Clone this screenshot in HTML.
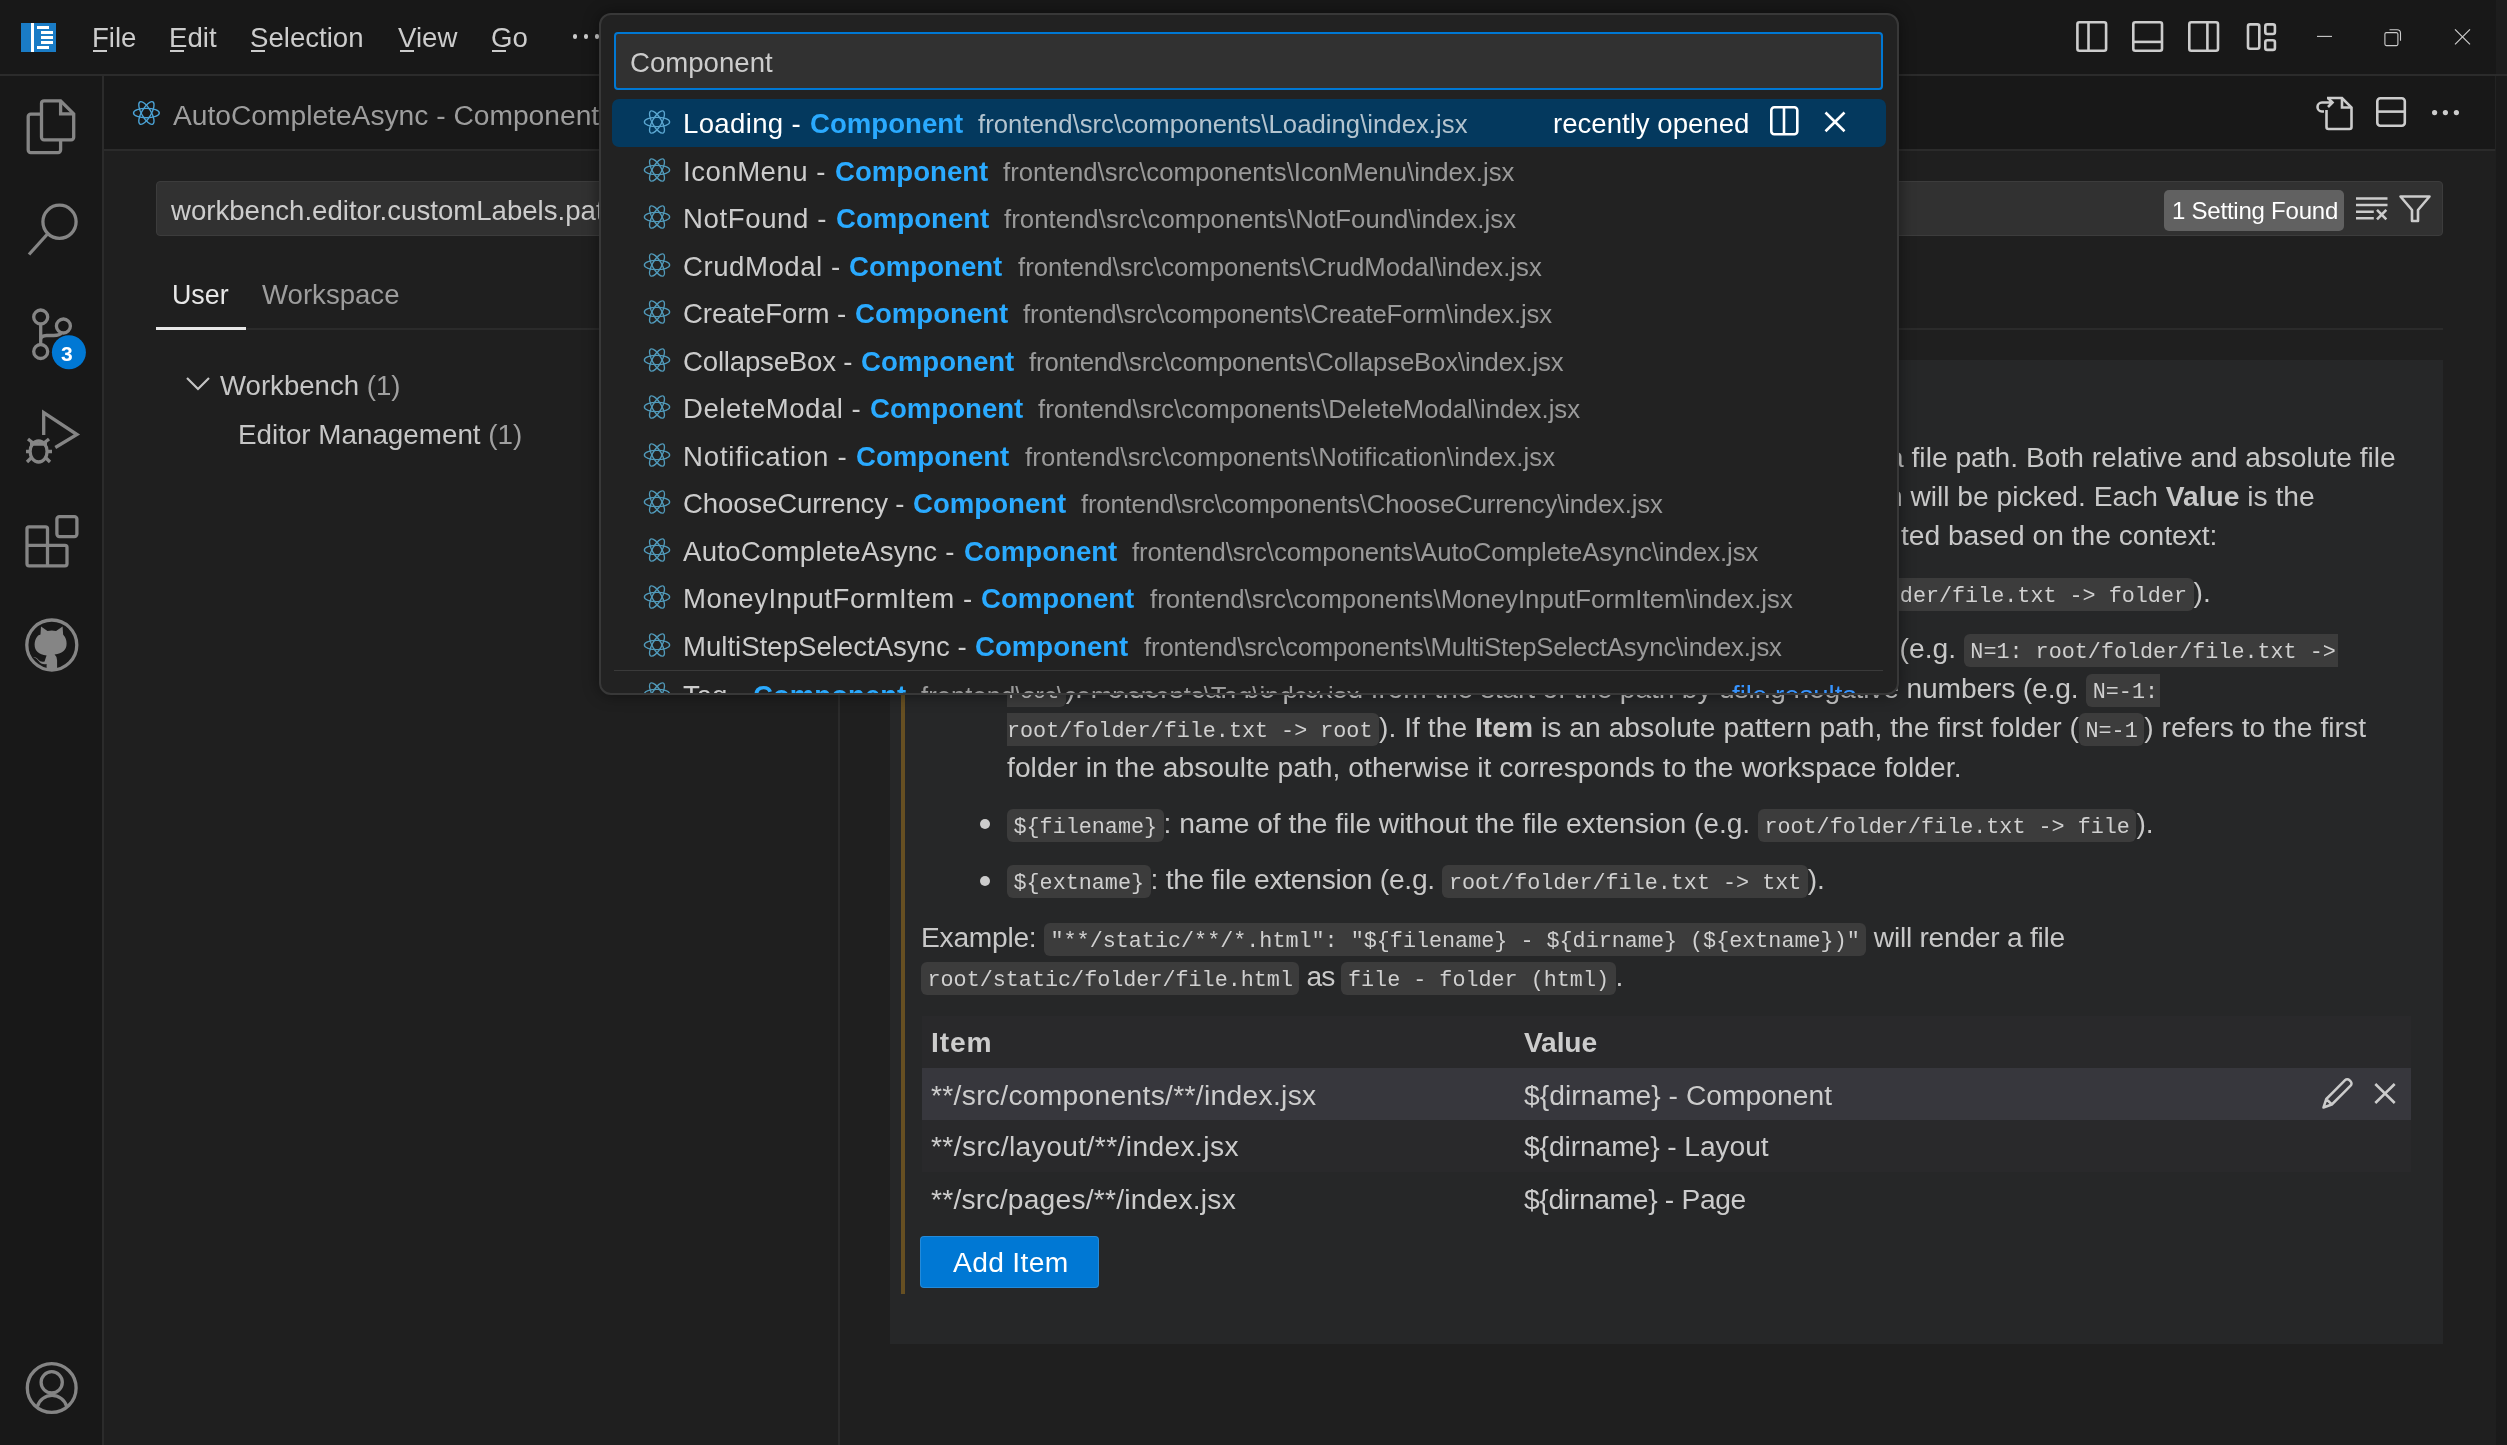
<!DOCTYPE html>
<html><head><meta charset="utf-8">
<style>
html,body{margin:0;padding:0;background:#1f1f1f;}
body{width:2507px;height:1445px;overflow:hidden;position:relative;font-family:"Liberation Sans",sans-serif;color:#cccccc;}
.a{position:absolute;}
.nw{white-space:nowrap;will-change:transform;}
svg{position:absolute;overflow:visible;}
code{letter-spacing:0;font-family:"Liberation Mono",monospace;font-size:21.75px;background:#3c3c3c;color:#d0d0d0;border-radius:6px;padding:6.4px 6.5px 1.9px 6.5px;}
b{font-weight:700;}
</style></head>
<body>

<div class="a" style="left:0px;top:0px;width:2507px;height:74px;background:#181818;"></div>
<div class="a" style="left:0px;top:74px;width:2507px;height:2px;background:#2b2b2b;"></div>
<div class="a" style="left:21px;top:23px;width:35px;height:29px;background:#1a7cc6;"></div>
<div class="a" style="left:31px;top:23px;width:3px;height:29px;background:#ffffff;"></div>
<div class="a" style="left:37px;top:26px;width:12px;height:2.6px;background:#ffffff;"></div>
<div class="a" style="left:41px;top:31px;width:12px;height:2.6px;background:#ffffff;"></div>
<div class="a" style="left:41px;top:36.3px;width:12px;height:2.6px;background:#ffffff;"></div>
<div class="a" style="left:41px;top:41.2px;width:12px;height:2.6px;background:#ffffff;"></div>
<div class="a" style="left:37px;top:46.2px;width:12px;height:2.6px;background:#ffffff;"></div>
<div class="a nw" style="left:91.5px;top:23.01px;font-size:27.6px;line-height:30.83px;color:#cccccc;font-weight:400;font-family:'Liberation Sans',sans-serif;">File</div>
<div class="a" style="left:93px;top:50px;width:14px;height:2px;background:#cccccc;"></div>
<div class="a nw" style="left:168.5px;top:23.01px;font-size:27.6px;line-height:30.83px;color:#cccccc;font-weight:400;font-family:'Liberation Sans',sans-serif;">Edit</div>
<div class="a" style="left:170px;top:50px;width:14px;height:2px;background:#cccccc;"></div>
<div class="a nw" style="left:249.5px;top:23.01px;font-size:27.6px;line-height:30.83px;color:#cccccc;font-weight:400;font-family:'Liberation Sans',sans-serif;">Selection</div>
<div class="a" style="left:251px;top:50px;width:14px;height:2px;background:#cccccc;"></div>
<div class="a nw" style="left:398.0px;top:23.01px;font-size:27.6px;line-height:30.83px;color:#cccccc;font-weight:400;font-family:'Liberation Sans',sans-serif;">View</div>
<div class="a" style="left:399.5px;top:50px;width:14px;height:2px;background:#cccccc;"></div>
<div class="a nw" style="left:490.5px;top:23.01px;font-size:27.6px;line-height:30.83px;color:#cccccc;font-weight:400;font-family:'Liberation Sans',sans-serif;">Go</div>
<div class="a" style="left:492px;top:50px;width:14px;height:2px;background:#cccccc;"></div>
<div class="a" style="left:573.0999999999999px;top:34.3px;width:4.4px;height:4.4px;border-radius:50%;background:#cccccc;"></div>
<div class="a" style="left:584.0px;top:34.3px;width:4.4px;height:4.4px;border-radius:50%;background:#cccccc;"></div>
<div class="a" style="left:594.8px;top:34.3px;width:4.4px;height:4.4px;border-radius:50%;background:#cccccc;"></div>
<svg style="left:2060px;top:10px;" width="240" height="60" viewBox="0 0 240 60"><rect x="17.4" y="12.3" width="28.7" height="28.4" rx="2" fill="none" stroke="#cccccc" stroke-width="2.6"/><line x1="28.5" y1="12" x2="28.5" y2="41" stroke="#cccccc" stroke-width="2.6"/><rect x="73.3" y="12.3" width="28.7" height="28.4" rx="2" fill="none" stroke="#cccccc" stroke-width="2.6"/><line x1="73" y1="31.9" x2="102" y2="31.9" stroke="#cccccc" stroke-width="2.6"/><rect x="129.3" y="12.3" width="28.7" height="28.4" rx="2" fill="none" stroke="#cccccc" stroke-width="2.6"/><line x1="147.4" y1="12" x2="147.4" y2="41" stroke="#cccccc" stroke-width="2.6"/><rect x="188" y="14.4" width="11.3" height="24.3" rx="2" fill="none" stroke="#cccccc" stroke-width="2.6"/><rect x="205.3" y="14.4" width="9.6" height="9.6" rx="2" fill="none" stroke="#cccccc" stroke-width="2.6"/><rect x="205.3" y="30.3" width="9.6" height="9.6" rx="2" fill="none" stroke="#cccccc" stroke-width="2.6"/></svg>
<svg style="left:2300px;top:10px;" width="207" height="60" viewBox="0 0 207 60"><line x1="17" y1="26.4" x2="32" y2="26.4" stroke="#cccccc" stroke-width="1.1"/><path d="M86.4 22.6 h10 a1.5 1.5 0 0 1 1.5 1.5 v10 a1.5 1.5 0 0 1 -1.5 1.5 h-10 a1.5 1.5 0 0 1 -1.5 -1.5 v-10 a1.5 1.5 0 0 1 1.5 -1.5z" fill="none" stroke="#cccccc" stroke-width="1.1"/><path d="M89.5 19.7 h7.5 a3.5 3.5 0 0 1 3.5 3.5 v7.5" fill="none" stroke="#cccccc" stroke-width="1.1"/><path d="M155 19.3 L170 34.4 M170 19.3 L155 34.4" stroke="#cccccc" stroke-width="1.2"/></svg>
<div class="a" style="left:2496px;top:0px;width:11px;height:74px;background:#1d1d1d;"></div>
<div class="a" style="left:0px;top:76px;width:102px;height:1369px;background:#181818;"></div>
<div class="a" style="left:102px;top:76px;width:2px;height:1369px;background:#2b2b2b;"></div>
<svg style="left:0px;top:80px;" width="102" height="100" viewBox="0 0 102 100"><path d="M41.5 34.2 H30.7 a2.5 2.5 0 0 0 -2.5 2.5 v33.4 a2.5 2.5 0 0 0 2.5 2.5 h27.4 a2.5 2.5 0 0 0 2.5 -2.5 v-10.3" fill="none" stroke="#858585" stroke-width="3.3"/><path d="M44 20.8 h16.6 l13.1 13.1 v23.4 a2.5 2.5 0 0 1 -2.5 2.5 h-27.2 a2.5 2.5 0 0 1 -2.5 -2.5 v-34 a2.5 2.5 0 0 1 2.5 -2.5z" fill="none" stroke="#858585" stroke-width="3.3"/><path d="M60.6 20.8 v13.1 h13.1" fill="none" stroke="#858585" stroke-width="3.3"/></svg>
<svg style="left:0px;top:190px;" width="102" height="80" viewBox="0 0 102 80"><circle cx="59.5" cy="31.8" r="16.6" fill="none" stroke="#858585" stroke-width="3.3"/><line x1="47.5" y1="44" x2="29" y2="64.5" stroke="#858585" stroke-width="3.3"/></svg>
<svg style="left:0px;top:300px;" width="102" height="80" viewBox="0 0 102 80"><circle cx="40.7" cy="17" r="7" fill="none" stroke="#858585" stroke-width="3.3"/><circle cx="63.4" cy="26" r="7" fill="none" stroke="#858585" stroke-width="3.3"/><circle cx="40.7" cy="51.5" r="7" fill="none" stroke="#858585" stroke-width="3.3"/><path d="M40.7 24 V44.5 M40.7 40 q0 -4.5 6 -4.5 h7 q6 0 8 -3" fill="none" stroke="#858585" stroke-width="3.3"/><circle cx="68.9" cy="52.3" r="17" fill="#0078d4"/></svg>
<div class="a nw" style="left:60.5px;top:342.49px;font-size:21px;line-height:23.46px;color:#ffffff;font-weight:700;font-family:'Liberation Sans',sans-serif;">3</div>
<svg style="left:0px;top:400px;" width="102" height="80" viewBox="0 0 102 80"><path d="M43.7 35 V12.6 L77 34.5 L55.3 47.5" fill="none" stroke="#858585" stroke-width="3.3"/><ellipse cx="38.6" cy="51.5" rx="8.5" ry="10.5" fill="none" stroke="#858585" stroke-width="3.3"/><path d="M30 44 h17 M26 51.5 h5 M46 51.5 h6 M27 62 l5 -5 M50 62 l-5 -5 M28 39 l5 4 M49 39 l-5 4" fill="none" stroke="#858585" stroke-width="3.3"/></svg>
<svg style="left:0px;top:500px;" width="102" height="80" viewBox="0 0 102 80"><rect x="56.9" y="16.6" width="20" height="20" rx="2.5" fill="none" stroke="#858585" stroke-width="3.3"/><path d="M29 26.8 h16.5 a2 2 0 0 1 2 2 v16.5 h17.5 a2 2 0 0 1 2 2 v16.5 a2 2 0 0 1 -2 2 h-36 a2 2 0 0 1 -2 -2 v-35 a2 2 0 0 1 2 -2z M27.5 45.3 h20 M47.5 45.3 v20" fill="none" stroke="#858585" stroke-width="3.3"/></svg>
<svg style="left:0px;top:600px;" width="102" height="90" viewBox="0 0 102 90"><circle cx="51.8" cy="45" r="25" fill="none" stroke="#858585" stroke-width="3.3"/><path d="M40.5 34.5 l0.5 -8 l6.5 4.5 q4.3 -1.2 8.6 0 l6.5 -4.5 l0.5 8 q3.5 4 3.5 9 q0 9.5 -12 11 q2.5 2 2.5 6 v9.5 h-10.5 v-6 q-5 1 -8 -3 q-2 -3 -5.5 -4 q3.5 0 5.5 3 q2 2.5 6 1.5 q1.5 -5 2 -6 q-12 -1.5 -12 -11 q0 -5 3.5 -9z" fill="#858585"/></svg>
<svg style="left:0px;top:1340px;" width="102" height="100" viewBox="0 0 102 100"><circle cx="51.7" cy="48" r="24.4" fill="none" stroke="#858585" stroke-width="3.3"/><circle cx="51.7" cy="42.3" r="10.6" fill="none" stroke="#858585" stroke-width="3.3"/><path d="M37.4 66.5 A15.2 15.2 0 0 1 66.7 66.5" fill="none" stroke="#858585" stroke-width="3.3"/></svg>
<div class="a" style="left:104px;top:76px;width:2392px;height:73px;background:#181818;"></div>
<div class="a" style="left:104px;top:149px;width:2392px;height:2px;background:#2b2b2b;"></div>
<svg style="left:103px;top:75px;" width="80" height="74" viewBox="0 0 80 74"><g transform="translate(43.4,38) scale(1.0)" fill="none" stroke="#4ba3d6" stroke-width="1.35"><ellipse rx="12.9" ry="4.7"/><ellipse rx="12.9" ry="4.7" transform="rotate(60)"/><ellipse rx="12.9" ry="4.7" transform="rotate(120)"/></g></svg>
<div class="a nw" style="left:173px;top:99.67px;font-size:28.2px;line-height:31.51px;color:#9d9d9d;font-weight:400;font-family:'Liberation Sans',sans-serif;">AutoCompleteAsync - Component</div>
<svg style="left:2300px;top:85px;" width="180" height="60" viewBox="0 0 180 60"><path d="M27 13 h15 l9.5 9.5 v19.5 a2 2 0 0 1 -2 2 h-21 a2 2 0 0 1 -2 -2 v-17" fill="none" stroke="#cccccc" stroke-width="2.6"/><path d="M42 13 v9.5 h9.5" fill="none" stroke="#cccccc" stroke-width="2.6"/><path d="M24 26.5 h-2 a4.5 4.5 0 0 1 0 -9 h10 M28 13 l4.5 4.5 l-4.5 4.5" fill="none" stroke="#cccccc" stroke-width="2.6"/><rect x="77.3" y="13.3" width="27.5" height="27.5" rx="3" fill="none" stroke="#cccccc" stroke-width="2.6"/><line x1="77" y1="26.6" x2="105" y2="26.6" stroke="#cccccc" stroke-width="2.6"/><circle cx="134.6" cy="27.6" r="2.6" fill="#cccccc"/><circle cx="145.4" cy="27.6" r="2.6" fill="#cccccc"/><circle cx="156.4" cy="27.6" r="2.6" fill="#cccccc"/></svg>
<div class="a" style="left:104px;top:151px;width:2392px;height:1294px;background:#1f1f1f;"></div>
<div class="a" style="left:2496px;top:76px;width:11px;height:1369px;background:#1a1a1a;"></div>
<div class="a" style="left:2495px;top:76px;width:1px;height:75px;background:#232323;"></div>
<div class="a" style="left:156px;top:181px;width:2287px;height:55px;background:#313131;border:1px solid #3c3c3c;box-sizing:border-box;border-radius:4px;"></div>
<div class="a nw" style="left:170.5px;top:196.31px;font-size:27.6px;line-height:30.83px;color:#cccccc;font-weight:400;font-family:'Liberation Sans',sans-serif;">workbench.editor.customLabels.patterns</div>
<div class="a" style="left:2164px;top:190px;width:180px;height:41px;background:#616161;border-radius:5px;"></div>
<div class="a nw" style="left:2171.5px;top:198.37px;font-size:24px;line-height:26.81px;color:#ffffff;font-weight:400;font-family:'Liberation Sans',sans-serif;letter-spacing:-0.230px;">1 Setting Found</div>
<svg style="left:2350px;top:190px;" width="90" height="40" viewBox="0 0 90 40"><path d="M6 8.5 h31.5 M6 15 h31.5 M6 21.7 h17.8 M6 28.3 h17.8" stroke="#cccccc" stroke-width="2.6"/><path d="M27 19.8 l9.3 9.5 M36.3 19.8 l-9.3 9.5" stroke="#cccccc" stroke-width="2.6"/><path d="M50.5 6.5 h29 l-11.5 13.5 v11 h-6 v-11z" fill="none" stroke="#cccccc" stroke-width="2.6" stroke-linejoin="round"/></svg>
<div class="a nw" style="left:172px;top:280.74px;font-size:26.8px;line-height:29.94px;color:#e7e7e7;font-weight:400;font-family:'Liberation Sans',sans-serif;">User</div>
<div class="a nw" style="left:262px;top:280.01px;font-size:27.6px;line-height:30.83px;color:#9d9d9d;font-weight:400;font-family:'Liberation Sans',sans-serif;">Workspace</div>
<div class="a" style="left:156px;top:328px;width:2287px;height:1.5px;background:#2b2b2b;"></div>
<div class="a" style="left:156px;top:327px;width:90px;height:3px;background:#e7e7e7;"></div>
<svg style="left:170px;top:360px;" width="60" height="40" viewBox="0 0 60 40"><path d="M17 18 l11 11 l11 -11" fill="none" stroke="#c5c5c5" stroke-width="2.2"/></svg>
<div class="a nw" style="left:220px;top:371.01px;font-size:27.6px;line-height:30.83px;color:#c6c6c6;font-weight:400;font-family:'Liberation Sans',sans-serif;">Workbench <span style="color:#a0a0a0">(1)</span></div>
<div class="a nw" style="left:237.5px;top:419.13px;font-size:27.8px;line-height:31.06px;color:#c6c6c6;font-weight:400;font-family:'Liberation Sans',sans-serif;">Editor Management <span style="color:#a0a0a0">(1)</span></div>
<div class="a" style="left:838px;top:330px;width:1.6px;height:1115px;background:#2b2b2b;"></div>
<div class="a" style="left:890px;top:360px;width:1553px;height:984px;background:#262728;"></div>
<div class="a" style="left:901px;top:375px;width:4px;height:919px;background:#664f22;"></div>
<div class="a nw" style="right:111.50px;top:441.77px;font-size:28.2px;line-height:31.51px;color:#c8c8c8;font-weight:400;font-family:'Liberation Sans',sans-serif;">Controls the rendering of the editor label. Each <b>Item</b> is a pattern that matches a file path. Both relative and absolute file</div>
<div class="a nw" style="right:192.50px;top:481.17px;font-size:28.2px;line-height:31.51px;color:#c8c8c8;font-weight:400;font-family:'Liberation Sans',sans-serif;">Absolute patterns must start with a <code>/</code>. In case multiple patterns match, the longest matching path will be picked. Each <b>Value</b> is the</div>
<div class="a nw" style="right:290.00px;top:520.27px;font-size:28.2px;line-height:31.51px;color:#c8c8c8;font-weight:400;font-family:'Liberation Sans',sans-serif;">template for the rendered editor when the <b>Item</b> matches. Variables are substituted based on the context:</div>
<div class="a nw" style="right:296.50px;top:577.47px;font-size:28.2px;line-height:31.51px;color:#c8c8c8;font-weight:400;font-family:'Liberation Sans',sans-serif;"><code style="border-radius:6px 6px 6px 6px;padding-left:6.5px;padding-right:6.5px;">${dirname}</code>: name of the folder in which the file is located (e.g. <code style="border-radius:6px 6px 6px 6px;padding-left:6.5px;padding-right:6.5px;">root/folder/file.txt -&gt; folder</code>).</div>
<div class="a nw" style="right:169.00px;top:633.47px;font-size:28.2px;line-height:31.51px;color:#c8c8c8;font-weight:400;font-family:'Liberation Sans',sans-serif;"><code style="border-radius:6px 6px 6px 6px;padding-left:6.5px;padding-right:6.5px;">${dirname(N)}</code>: name of the nth parent folder in which the file is located (e.g. <code style="border-radius:6px 0 0 6px;padding-left:6.5px;padding-right:2px;">N=1: root/folder/file.txt -&gt;</code></div>
<div class="a nw" style="left:1007px;top:672.97px;font-size:28.2px;line-height:31.51px;color:#c8c8c8;font-weight:400;font-family:'Liberation Sans',sans-serif;letter-spacing:-0.143px;"><code style="border-radius:0 6px 6px 0;padding-left:0;padding-right:6.5px;">root</code>). Folders can be picked from the start of the path by using negative numbers (e.g. <code style="border-radius:6px 0 0 6px;padding-left:6.5px;padding-right:2px;">N=-1:</code></div>
<div class="a nw" style="left:1007px;top:712.47px;font-size:28.2px;line-height:31.51px;color:#c8c8c8;font-weight:400;font-family:'Liberation Sans',sans-serif;letter-spacing:0.045px;"><code style="border-radius:0 6px 6px 0;padding-left:0;padding-right:6.5px;">root/folder/file.txt -&gt; root</code>). If the <b>Item</b> is an absolute pattern path, the first folder (<code style="border-radius:6px 6px 6px 6px;padding-left:6.5px;padding-right:6.5px;">N=-1</code>) refers to the first</div>
<div class="a nw" style="left:1007px;top:751.97px;font-size:28.2px;line-height:31.51px;color:#c8c8c8;font-weight:400;font-family:'Liberation Sans',sans-serif;letter-spacing:0.044px;">folder in the absoulte path, otherwise it corresponds to the workspace folder.</div>
<div class="a" style="left:979.8px;top:819.0px;width:10.4px;height:10.4px;border-radius:50%;background:#cccccc;"></div>
<div class="a" style="left:979.8px;top:875.5px;width:10.4px;height:10.4px;border-radius:50%;background:#cccccc;"></div>
<div class="a nw" style="left:1007px;top:807.97px;font-size:28.2px;line-height:31.51px;color:#c8c8c8;font-weight:400;font-family:'Liberation Sans',sans-serif;letter-spacing:-0.051px;"><code style="border-radius:6px 6px 6px 6px;padding-left:6.5px;padding-right:6.5px;">${filename}</code>: name of the file without the file extension (e.g. <code style="border-radius:6px 6px 6px 6px;padding-left:6.5px;padding-right:6.5px;">root/folder/file.txt -&gt; file</code>).</div>
<div class="a nw" style="left:1007px;top:864.47px;font-size:28.2px;line-height:31.51px;color:#c8c8c8;font-weight:400;font-family:'Liberation Sans',sans-serif;letter-spacing:-0.274px;"><code style="border-radius:6px 6px 6px 6px;padding-left:6.5px;padding-right:6.5px;">${extname}</code>: the file extension (e.g. <code style="border-radius:6px 6px 6px 6px;padding-left:6.5px;padding-right:6.5px;">root/folder/file.txt -&gt; txt</code>).</div>
<div class="a nw" style="left:921px;top:921.97px;font-size:28.2px;line-height:31.51px;color:#c8c8c8;font-weight:400;font-family:'Liberation Sans',sans-serif;letter-spacing:-0.259px;">Example: <code style="border-radius:6px 6px 6px 6px;padding-left:6.5px;padding-right:6.5px;">&quot;**/static/**/*.html&quot;: &quot;${filename} - ${dirname} (${extname})&quot;</code> will render a file</div>
<div class="a nw" style="left:920.5px;top:961.47px;font-size:28.2px;line-height:31.51px;color:#c8c8c8;font-weight:400;font-family:'Liberation Sans',sans-serif;letter-spacing:-0.859px;"><code style="border-radius:6px 6px 6px 6px;padding-left:6.5px;padding-right:6.5px;">root/static/folder/file.html</code> as <code style="border-radius:6px 6px 6px 6px;padding-left:6.5px;padding-right:6.5px;">file - folder (html)</code>.</div>
<div class="a" style="left:922px;top:1016px;width:1489px;height:52px;background:#29292b;"></div>
<div class="a" style="left:922px;top:1068px;width:1489px;height:52px;background:#37373d;"></div>
<div class="a" style="left:922px;top:1120px;width:1489px;height:52px;background:#29292b;"></div>
<div class="a nw" style="left:931px;top:1027.47px;font-size:28.2px;line-height:31.51px;color:#cccccc;font-weight:700;font-family:'Liberation Sans',sans-serif;letter-spacing:0.883px;">Item</div>
<div class="a nw" style="left:1523.5px;top:1027.47px;font-size:28.2px;line-height:31.51px;color:#cccccc;font-weight:700;font-family:'Liberation Sans',sans-serif;letter-spacing:-0.131px;">Value</div>
<div class="a nw" style="left:931px;top:1079.77px;font-size:28.2px;line-height:31.51px;color:#cccccc;font-weight:400;font-family:'Liberation Sans',sans-serif;letter-spacing:0.316px;">**/src/components/**/index.jsx</div>
<div class="a nw" style="left:1523.5px;top:1079.77px;font-size:28.2px;line-height:31.51px;color:#cccccc;font-weight:400;font-family:'Liberation Sans',sans-serif;letter-spacing:0.040px;">${dirname} - Component</div>
<div class="a nw" style="left:931px;top:1131.47px;font-size:28.2px;line-height:31.51px;color:#cccccc;font-weight:400;font-family:'Liberation Sans',sans-serif;letter-spacing:0.397px;">**/src/layout/**/index.jsx</div>
<div class="a nw" style="left:1523.5px;top:1131.47px;font-size:28.2px;line-height:31.51px;color:#cccccc;font-weight:400;font-family:'Liberation Sans',sans-serif;letter-spacing:-0.081px;">${dirname} - Layout</div>
<div class="a nw" style="left:931px;top:1183.87px;font-size:28.2px;line-height:31.51px;color:#cccccc;font-weight:400;font-family:'Liberation Sans',sans-serif;letter-spacing:0.230px;">**/src/pages/**/index.jsx</div>
<div class="a nw" style="left:1523.5px;top:1183.87px;font-size:28.2px;line-height:31.51px;color:#cccccc;font-weight:400;font-family:'Liberation Sans',sans-serif;letter-spacing:-0.308px;">${dirname} - Page</div>
<svg style="left:2310px;top:1070px;" width="100" height="50" viewBox="0 0 100 50"><path d="M13.5 37.5 l2.8 -8.5 l18.8 -18.8 a3 3 0 0 1 4.3 0 l1.2 1.2 a3 3 0 0 1 0 4.3 l-18.8 18.8z M16.3 29 l5.6 5.6" fill="none" stroke="#cccccc" stroke-width="2.5" stroke-linejoin="round"/><path d="M65.3 14 l19.4 19 M84.7 14 l-19.4 19" stroke="#cccccc" stroke-width="2.6"/></svg>
<div class="a" style="left:920px;top:1236px;width:179px;height:52px;background:#0078d4;border-radius:4px;border:1px solid rgba(255,255,255,0.14);box-sizing:border-box;"></div>
<div class="a nw" style="left:952.5px;top:1247.47px;font-size:28.2px;line-height:31.51px;color:#ffffff;font-weight:400;font-family:'Liberation Sans',sans-serif;letter-spacing:0.336px;">Add Item</div>
<div class="a" style="left:599px;top:13px;width:1300px;height:682px;background:#222222;border:2px solid #383838;box-sizing:border-box;border-radius:12px;box-shadow:0 0 16px rgba(0,0,0,0.45);overflow:hidden;">
<div class="a" style="left:13px;top:17px;width:1269px;height:58px;background:#313131;border:2px solid #0078d4;box-sizing:border-box;border-radius:4px;"></div>
<div class="a nw" style="left:28.5px;top:33.21px;font-size:27.6px;line-height:30.83px;color:#cccccc;font-weight:400;font-family:'Liberation Sans',sans-serif;">Component</div>
<div class="a" style="left:11px;top:84.1px;width:1274px;height:47.6px;background:#04395e;border-radius:7px;"></div>
<svg style="left:29px;top:87.1px;" width="60" height="40" viewBox="0 0 60 40"><g transform="translate(27,20) scale(0.98)" fill="none" stroke="#5aa6d0" stroke-width="1.35"><ellipse rx="12.9" ry="4.7"/><ellipse rx="12.9" ry="4.7" transform="rotate(60)"/><ellipse rx="12.9" ry="4.7" transform="rotate(120)"/></g></svg>
<div class="a nw" style="left:82.20000000000005px;top:94.11px;font-size:27.6px;line-height:30.83px;color:#ffffff;font-weight:400;font-family:'Liberation Sans',sans-serif;letter-spacing:0.325px;">Loading -</div>
<div class="a nw" style="left:208.70000000000005px;top:94.11px;font-size:27.6px;line-height:30.83px;color:#2aaaff;font-weight:700;font-family:'Liberation Sans',sans-serif;">Component</div>
<div class="a nw" style="left:377.0px;top:95.13px;font-size:25.7px;line-height:28.71px;color:#b4c4cf;font-weight:400;font-family:'Liberation Sans',sans-serif;letter-spacing:0.028px;">frontend\src\components\Loading\index.jsx</div>
<div class="a nw" style="left:951.5px;top:94.11px;font-size:27.6px;line-height:30.83px;color:#ffffff;font-weight:400;font-family:'Liberation Sans',sans-serif;">recently opened</div>
<svg style="left:1159px;top:84.1px;" width="100" height="48" viewBox="0 0 100 48"><rect x="11.3" y="8.3" width="26" height="27" rx="3" fill="none" stroke="#ffffff" stroke-width="2.6"/><line x1="24" y1="8" x2="24" y2="36" stroke="#ffffff" stroke-width="2.6"/><path d="M65.5 13.5 l19 18.7 M84.5 13.5 l-19 18.7" stroke="#ffffff" stroke-width="2.6"/></svg>
<svg style="left:29px;top:134.62px;" width="60" height="40" viewBox="0 0 60 40"><g transform="translate(27,20) scale(0.98)" fill="none" stroke="#519aba" stroke-width="1.35"><ellipse rx="12.9" ry="4.7"/><ellipse rx="12.9" ry="4.7" transform="rotate(60)"/><ellipse rx="12.9" ry="4.7" transform="rotate(120)"/></g></svg>
<div class="a nw" style="left:82.20000000000005px;top:141.63px;font-size:27.6px;line-height:30.83px;color:#cccccc;font-weight:400;font-family:'Liberation Sans',sans-serif;letter-spacing:0.495px;">IconMenu -</div>
<div class="a nw" style="left:233.70000000000005px;top:141.63px;font-size:27.6px;line-height:30.83px;color:#2aaaff;font-weight:700;font-family:'Liberation Sans',sans-serif;">Component</div>
<div class="a nw" style="left:402.0px;top:142.65px;font-size:25.7px;line-height:28.71px;color:#9a9a9a;font-weight:400;font-family:'Liberation Sans',sans-serif;letter-spacing:0.042px;">frontend\src\components\IconMenu\index.jsx</div>
<svg style="left:29px;top:182.14px;" width="60" height="40" viewBox="0 0 60 40"><g transform="translate(27,20) scale(0.98)" fill="none" stroke="#519aba" stroke-width="1.35"><ellipse rx="12.9" ry="4.7"/><ellipse rx="12.9" ry="4.7" transform="rotate(60)"/><ellipse rx="12.9" ry="4.7" transform="rotate(120)"/></g></svg>
<div class="a nw" style="left:82.20000000000005px;top:189.15px;font-size:27.6px;line-height:30.83px;color:#cccccc;font-weight:400;font-family:'Liberation Sans',sans-serif;letter-spacing:0.605px;">NotFound -</div>
<div class="a nw" style="left:234.79999999999995px;top:189.15px;font-size:27.6px;line-height:30.83px;color:#2aaaff;font-weight:700;font-family:'Liberation Sans',sans-serif;">Component</div>
<div class="a nw" style="left:403.0999999999999px;top:190.17px;font-size:25.7px;line-height:28.71px;color:#9a9a9a;font-weight:400;font-family:'Liberation Sans',sans-serif;letter-spacing:0.056px;">frontend\src\components\NotFound\index.jsx</div>
<svg style="left:29px;top:229.66px;" width="60" height="40" viewBox="0 0 60 40"><g transform="translate(27,20) scale(0.98)" fill="none" stroke="#519aba" stroke-width="1.35"><ellipse rx="12.9" ry="4.7"/><ellipse rx="12.9" ry="4.7" transform="rotate(60)"/><ellipse rx="12.9" ry="4.7" transform="rotate(120)"/></g></svg>
<div class="a nw" style="left:82.20000000000005px;top:236.67px;font-size:27.6px;line-height:30.83px;color:#cccccc;font-weight:400;font-family:'Liberation Sans',sans-serif;letter-spacing:0.534px;">CrudModal -</div>
<div class="a nw" style="left:248.39999999999998px;top:236.67px;font-size:27.6px;line-height:30.83px;color:#2aaaff;font-weight:700;font-family:'Liberation Sans',sans-serif;">Component</div>
<div class="a nw" style="left:416.70000000000005px;top:237.69px;font-size:25.7px;line-height:28.71px;color:#9a9a9a;font-weight:400;font-family:'Liberation Sans',sans-serif;letter-spacing:0.028px;">frontend\src\components\CrudModal\index.jsx</div>
<svg style="left:29px;top:277.18px;" width="60" height="40" viewBox="0 0 60 40"><g transform="translate(27,20) scale(0.98)" fill="none" stroke="#519aba" stroke-width="1.35"><ellipse rx="12.9" ry="4.7"/><ellipse rx="12.9" ry="4.7" transform="rotate(60)"/><ellipse rx="12.9" ry="4.7" transform="rotate(120)"/></g></svg>
<div class="a nw" style="left:82.20000000000005px;top:284.19px;font-size:27.6px;line-height:30.83px;color:#cccccc;font-weight:400;font-family:'Liberation Sans',sans-serif;letter-spacing:-0.080px;">CreateForm -</div>
<div class="a nw" style="left:253.79999999999995px;top:284.19px;font-size:27.6px;line-height:30.83px;color:#2aaaff;font-weight:700;font-family:'Liberation Sans',sans-serif;">Component</div>
<div class="a nw" style="left:422.0999999999999px;top:285.21px;font-size:25.7px;line-height:28.71px;color:#9a9a9a;font-weight:400;font-family:'Liberation Sans',sans-serif;letter-spacing:-0.111px;">frontend\src\components\CreateForm\index.jsx</div>
<svg style="left:29px;top:324.70000000000005px;" width="60" height="40" viewBox="0 0 60 40"><g transform="translate(27,20) scale(0.98)" fill="none" stroke="#519aba" stroke-width="1.35"><ellipse rx="12.9" ry="4.7"/><ellipse rx="12.9" ry="4.7" transform="rotate(60)"/><ellipse rx="12.9" ry="4.7" transform="rotate(120)"/></g></svg>
<div class="a nw" style="left:82.20000000000005px;top:331.71px;font-size:27.6px;line-height:30.83px;color:#cccccc;font-weight:400;font-family:'Liberation Sans',sans-serif;letter-spacing:-0.199px;">CollapseBox -</div>
<div class="a nw" style="left:259.9px;top:331.71px;font-size:27.6px;line-height:30.83px;color:#2aaaff;font-weight:700;font-family:'Liberation Sans',sans-serif;">Component</div>
<div class="a nw" style="left:428.20000000000005px;top:332.73px;font-size:25.7px;line-height:28.71px;color:#9a9a9a;font-weight:400;font-family:'Liberation Sans',sans-serif;letter-spacing:-0.148px;">frontend\src\components\CollapseBox\index.jsx</div>
<svg style="left:29px;top:372.22px;" width="60" height="40" viewBox="0 0 60 40"><g transform="translate(27,20) scale(0.98)" fill="none" stroke="#519aba" stroke-width="1.35"><ellipse rx="12.9" ry="4.7"/><ellipse rx="12.9" ry="4.7" transform="rotate(60)"/><ellipse rx="12.9" ry="4.7" transform="rotate(120)"/></g></svg>
<div class="a nw" style="left:82.20000000000005px;top:379.23px;font-size:27.6px;line-height:30.83px;color:#cccccc;font-weight:400;font-family:'Liberation Sans',sans-serif;letter-spacing:0.494px;">DeleteModal -</div>
<div class="a nw" style="left:268.9px;top:379.23px;font-size:27.6px;line-height:30.83px;color:#2aaaff;font-weight:700;font-family:'Liberation Sans',sans-serif;">Component</div>
<div class="a nw" style="left:437.20000000000005px;top:380.25px;font-size:25.7px;line-height:28.71px;color:#9a9a9a;font-weight:400;font-family:'Liberation Sans',sans-serif;letter-spacing:0.021px;">frontend\src\components\DeleteModal\index.jsx</div>
<svg style="left:29px;top:419.74px;" width="60" height="40" viewBox="0 0 60 40"><g transform="translate(27,20) scale(0.98)" fill="none" stroke="#519aba" stroke-width="1.35"><ellipse rx="12.9" ry="4.7"/><ellipse rx="12.9" ry="4.7" transform="rotate(60)"/><ellipse rx="12.9" ry="4.7" transform="rotate(120)"/></g></svg>
<div class="a nw" style="left:82.20000000000005px;top:426.75px;font-size:27.6px;line-height:30.83px;color:#cccccc;font-weight:400;font-family:'Liberation Sans',sans-serif;letter-spacing:0.803px;">Notification -</div>
<div class="a nw" style="left:255.29999999999995px;top:426.75px;font-size:27.6px;line-height:30.83px;color:#2aaaff;font-weight:700;font-family:'Liberation Sans',sans-serif;">Component</div>
<div class="a nw" style="left:423.5999999999999px;top:427.77px;font-size:25.7px;line-height:28.71px;color:#9a9a9a;font-weight:400;font-family:'Liberation Sans',sans-serif;letter-spacing:0.137px;">frontend\src\components\Notification\index.jsx</div>
<svg style="left:29px;top:467.26px;" width="60" height="40" viewBox="0 0 60 40"><g transform="translate(27,20) scale(0.98)" fill="none" stroke="#519aba" stroke-width="1.35"><ellipse rx="12.9" ry="4.7"/><ellipse rx="12.9" ry="4.7" transform="rotate(60)"/><ellipse rx="12.9" ry="4.7" transform="rotate(120)"/></g></svg>
<div class="a nw" style="left:82.20000000000005px;top:474.27px;font-size:27.6px;line-height:30.83px;color:#cccccc;font-weight:400;font-family:'Liberation Sans',sans-serif;letter-spacing:-0.157px;">ChooseCurrency -</div>
<div class="a nw" style="left:312.1px;top:474.27px;font-size:27.6px;line-height:30.83px;color:#2aaaff;font-weight:700;font-family:'Liberation Sans',sans-serif;">Component</div>
<div class="a nw" style="left:480.4000000000001px;top:475.29px;font-size:25.7px;line-height:28.71px;color:#9a9a9a;font-weight:400;font-family:'Liberation Sans',sans-serif;letter-spacing:-0.168px;">frontend\src\components\ChooseCurrency\index.jsx</div>
<svg style="left:29px;top:514.78px;" width="60" height="40" viewBox="0 0 60 40"><g transform="translate(27,20) scale(0.98)" fill="none" stroke="#519aba" stroke-width="1.35"><ellipse rx="12.9" ry="4.7"/><ellipse rx="12.9" ry="4.7" transform="rotate(60)"/><ellipse rx="12.9" ry="4.7" transform="rotate(120)"/></g></svg>
<div class="a nw" style="left:82.20000000000005px;top:521.79px;font-size:27.6px;line-height:30.83px;color:#cccccc;font-weight:400;font-family:'Liberation Sans',sans-serif;letter-spacing:0.260px;">AutoCompleteAsync -</div>
<div class="a nw" style="left:362.5px;top:521.79px;font-size:27.6px;line-height:30.83px;color:#2aaaff;font-weight:700;font-family:'Liberation Sans',sans-serif;">Component</div>
<div class="a nw" style="left:530.8px;top:522.81px;font-size:25.7px;line-height:28.71px;color:#9a9a9a;font-weight:400;font-family:'Liberation Sans',sans-serif;letter-spacing:-0.068px;">frontend\src\components\AutoCompleteAsync\index.jsx</div>
<svg style="left:29px;top:562.3000000000001px;" width="60" height="40" viewBox="0 0 60 40"><g transform="translate(27,20) scale(0.98)" fill="none" stroke="#519aba" stroke-width="1.35"><ellipse rx="12.9" ry="4.7"/><ellipse rx="12.9" ry="4.7" transform="rotate(60)"/><ellipse rx="12.9" ry="4.7" transform="rotate(120)"/></g></svg>
<div class="a nw" style="left:82.20000000000005px;top:569.31px;font-size:27.6px;line-height:30.83px;color:#cccccc;font-weight:400;font-family:'Liberation Sans',sans-serif;letter-spacing:0.530px;">MoneyInputFormItem -</div>
<div class="a nw" style="left:380.4px;top:569.31px;font-size:27.6px;line-height:30.83px;color:#2aaaff;font-weight:700;font-family:'Liberation Sans',sans-serif;">Component</div>
<div class="a nw" style="left:548.7px;top:570.33px;font-size:25.7px;line-height:28.71px;color:#9a9a9a;font-weight:400;font-family:'Liberation Sans',sans-serif;letter-spacing:0.034px;">frontend\src\components\MoneyInputFormItem\index.jsx</div>
<svg style="left:29px;top:609.82px;" width="60" height="40" viewBox="0 0 60 40"><g transform="translate(27,20) scale(0.98)" fill="none" stroke="#519aba" stroke-width="1.35"><ellipse rx="12.9" ry="4.7"/><ellipse rx="12.9" ry="4.7" transform="rotate(60)"/><ellipse rx="12.9" ry="4.7" transform="rotate(120)"/></g></svg>
<div class="a nw" style="left:82.20000000000005px;top:616.83px;font-size:27.6px;line-height:30.83px;color:#cccccc;font-weight:400;font-family:'Liberation Sans',sans-serif;letter-spacing:-0.005px;">MultiStepSelectAsync -</div>
<div class="a nw" style="left:374.29999999999995px;top:616.83px;font-size:27.6px;line-height:30.83px;color:#2aaaff;font-weight:700;font-family:'Liberation Sans',sans-serif;">Component</div>
<div class="a nw" style="left:542.5999999999999px;top:617.85px;font-size:25.7px;line-height:28.71px;color:#9a9a9a;font-weight:400;font-family:'Liberation Sans',sans-serif;letter-spacing:-0.140px;">frontend\src\components\MultiStepSelectAsync\index.jsx</div>
<div class="a" style="left:13px;top:654.5px;width:1269px;height:1.5px;background:#3a3a3a;"></div>
<svg style="left:29px;top:659.34px;" width="60" height="40" viewBox="0 0 60 40"><g transform="translate(27,20) scale(0.98)" fill="none" stroke="#519aba" stroke-width="1.35"><ellipse rx="12.9" ry="4.7"/><ellipse rx="12.9" ry="4.7" transform="rotate(60)"/><ellipse rx="12.9" ry="4.7" transform="rotate(120)"/></g></svg>
<div class="a nw" style="left:82.20000000000005px;top:666.35px;font-size:27.6px;line-height:30.83px;color:#cccccc;font-weight:400;font-family:'Liberation Sans',sans-serif;letter-spacing:-0.012px;">Tag -</div>
<div class="a nw" style="left:152px;top:666.35px;font-size:27.6px;line-height:30.83px;color:#2aaaff;font-weight:700;font-family:'Liberation Sans',sans-serif;">Component</div>
<div class="a nw" style="left:320.29999999999995px;top:667.37px;font-size:25.7px;line-height:28.71px;color:#9a9a9a;font-weight:400;font-family:'Liberation Sans',sans-serif;letter-spacing:0.000px;">frontend\src\components\Tag\index.jsx</div>
<div class="a nw" style="right:41.00px;top:666.35px;font-size:27.6px;line-height:30.83px;color:#3794ff;font-weight:400;font-family:'Liberation Sans',sans-serif;">file results</div>
</div>
</body></html>
